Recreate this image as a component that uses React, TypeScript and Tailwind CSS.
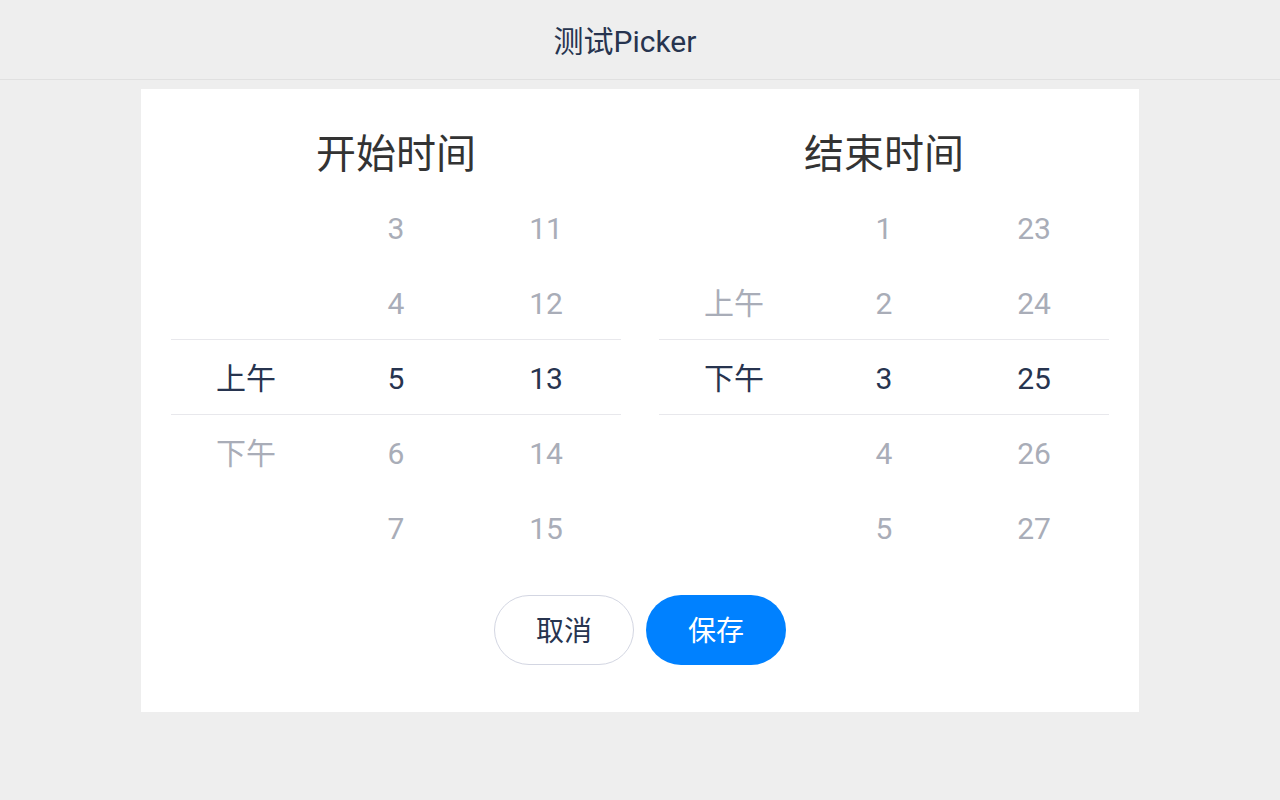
import React from 'react';

type Column = { items: (string | null)[] };

const font = { fontFamily: 'Roboto, "Noto Sans CJK SC", sans-serif' };

const PickerColumn: React.FC<Column> = ({ items }) => (
  <div className="flex-1 flex flex-col">
    {items.map((item, i) => (
      <div
        key={i}
        className={`h-[75px] flex items-center justify-center text-[30px] ${
          i === 2 ? 'text-[#27344f]' : 'text-[#a9adb8]'
        }`}
      >
        {item ?? ''}
      </div>
    ))}
  </div>
);

interface PickerProps {
  title: string;
  columns: (string | null)[][];
}

const Picker: React.FC<PickerProps> = ({ title, columns }) => (
  <div className="flex-1 flex flex-col">
    <div className="h-[72px] flex items-center justify-center text-[40px] text-[#333333]">{title}</div>
    <div className="relative flex">
      <div className="absolute left-0 right-0 top-[148px] h-[76px] border-y border-[#e8e8ec] pointer-events-none" />
      {columns.map((col, i) => (
        <PickerColumn key={i} items={col} />
      ))}
    </div>
  </div>
);

export default function App() {
  return (
    <div className="min-h-[800px] bg-[#eeeeee]" style={font}>
      <div className="h-[80px] border-b border-[#e0e0e0] flex items-center justify-center text-[30px] text-[#27344f] pt-[4px] pr-[30px]">
        测试Picker
      </div>
      <div className="mx-[141px] mt-[9px] bg-white px-[30px] pt-[30px] pb-[47px]">
        <div className="flex gap-[38px]">
          <Picker
            title="开始时间"
            columns={[
              [null, null, '上午', '下午', null],
              ['3', '4', '5', '6', '7'],
              ['11', '12', '13', '14', '15'],
            ]}
          />
          <Picker
            title="结束时间"
            columns={[
              [null, '上午', '下午', null, null],
              ['1', '2', '3', '4', '5'],
              ['23', '24', '25', '26', '27'],
            ]}
          />
        </div>
        <div className="mt-[29px] flex justify-center gap-[12px]">
          <button className="w-[140px] h-[70px] pt-[3px] rounded-full border border-[#d3d6e2] bg-white text-[28px] text-[#27344f]">
            取消
          </button>
          <button className="w-[140px] h-[70px] pt-[3px] rounded-full bg-[#0081ff] text-[28px] text-white">
            保存
          </button>
        </div>
      </div>
    </div>
  );
}
